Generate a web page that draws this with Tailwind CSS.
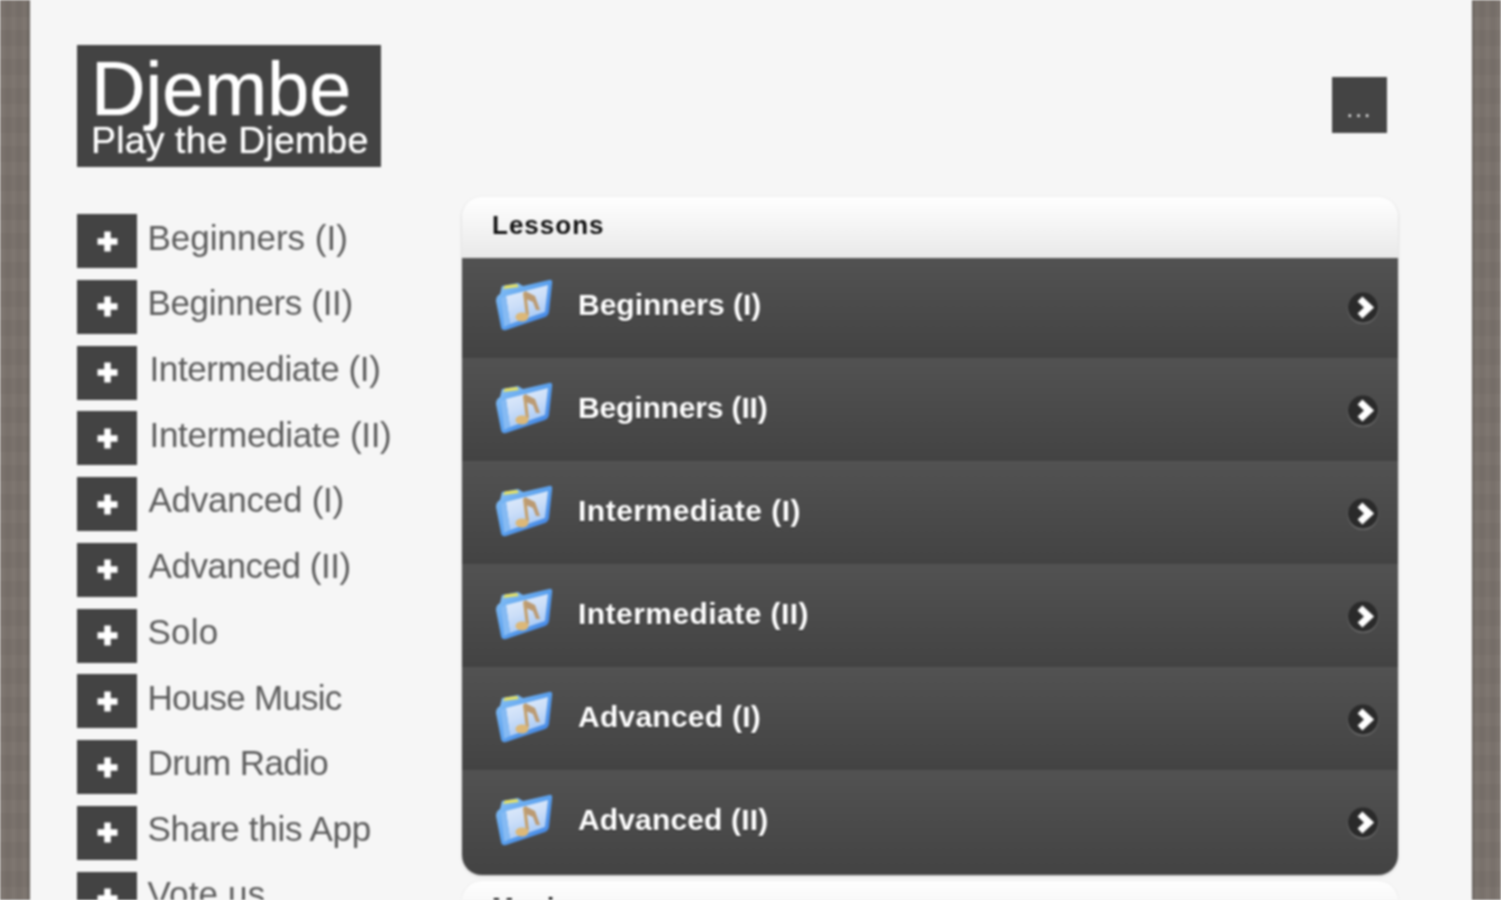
<!DOCTYPE html>
<html>
<head>
<meta charset="utf-8">
<script src="https://cdn.jsdelivr.net/npm/@tailwindcss/browser@4"></script>
<title>Djembe</title>
</head>
<body class="m-0 bg-[#f6f6f6]">
<svg width="0" height="0" class="absolute">
  <defs>
    <linearGradient id="fb" x1="0" y1="0" x2="1" y2="1"><stop offset="0" stop-color="#8cc4f6"/><stop offset="0.5" stop-color="#5aa0ee"/><stop offset="1" stop-color="#3f80e4"/></linearGradient>
    <linearGradient id="ff" x1="0" y1="0" x2="0.4" y2="1"><stop offset="0" stop-color="#e6effb"/><stop offset="0.55" stop-color="#cbdef8"/><stop offset="1" stop-color="#a7c8f4"/></linearGradient>
    <symbol id="folder" viewBox="0 0 60 56">
      <path d="M5 17 L7 9 L23 6 L28 9 L54 3 Q58 2 57 7 L54 35 Q53 39 50 40 L11 53 Q7 54 6 50 L1 24 Q1 19 5 17Z" fill="url(#fb)"/>
      <path d="M8 12 L10 8.5 L22 7 L24 10Z" fill="#e6e060"/>
      <path d="M11 19 L53 8 L50 35 L15 47Z" fill="url(#ff)"/>
      <path d="M31 14 L34 38 L31 39 L28 16Z" fill="#c4a06c"/>
      <path d="M30 14 L40 19 L45 33 L41 33 L38 25 L31 22Z" fill="#bb9a72"/>
      <ellipse cx="27" cy="40" rx="6.5" ry="4.5" fill="#dcb878"/>
      <path d="M11 19 L6 21 L9 50 L15 47Z" fill="#85baf3"/>
    </symbol>
    <symbol id="arrow" viewBox="0 0 32 32">
      <circle cx="16" cy="16.5" r="15.5" fill="#6a6a6a"/>
      <circle cx="16" cy="15.5" r="15" fill="#2a2a2a"/>
      <path d="M13 7 L22 15.5 L13 24" stroke="#fff" stroke-width="7" fill="none"/>
    </symbol>
    <symbol id="plus" viewBox="0 0 23 23">
      <path d="M11.5 1.5V21.5M1.5 11.5H21.5" stroke="#fff" stroke-width="6.5"/>
    </symbol>
  </defs>
</svg>
<div class="w-full h-[900px] overflow-hidden blur-[0.8px] [font-family:'Liberation_Sans',Arial,sans-serif] bg-[#7a726c] [background-image:repeating-linear-gradient(90deg,rgba(255,255,255,0.015)_0_5px,rgba(0,0,0,0.025)_5px_11px),repeating-linear-gradient(0deg,rgba(255,255,255,0.015)_0_13px,rgba(0,0,0,0.02)_13px_29px)]">
  <div class="ml-[30px] w-[1442px] h-full bg-[#f6f6f6] shadow-[0_0_3px_rgba(50,50,50,0.7)] pl-[47px] pr-[74px] pt-[45px] overflow-hidden">
    <header class="flex justify-between items-start h-[122px] mb-[30px]">
      <div class="w-[304px] h-[122px] bg-[#434343] shadow-[0_0_2px_#fff] text-white pl-[14px] pt-[5px] [text-shadow:0_0_1px_#fff]">
        <div class="text-[75.5px] leading-[78px]">Djembe</div>
        <div class="text-[37.5px] leading-[30px] -mt-[3px] tracking-[0.15px]">Play the Djembe</div>
      </div>
      <button class="w-[55px] h-[56px] mt-[32px] mr-[11px] bg-[#444444] shadow-[0_0_3px_#fff] text-[#f0f0f0] text-[24px] tracking-[2px] leading-none flex items-end justify-center pb-[12px]">...</button>
    </header>
    <div class="flex items-start">
      <nav class="w-[385px] shrink-0 pt-[17px] flex flex-col gap-[11.75px]">
        <a class="flex items-center h-[54px] text-[#5c5c5c] text-[35px]"><span class="w-[60px] h-[54px] bg-[#434343] flex items-center justify-center pl-[1px]"><svg class="w-[23px] h-[23px]"><use href="#plus"/></svg></span><span class="ml-[10.5px] pb-[6px]">Beginners (I)</span></a>
        <a class="flex items-center h-[54px] text-[#5c5c5c] text-[35px]"><span class="w-[60px] h-[54px] bg-[#434343] flex items-center justify-center pl-[1px]"><svg class="w-[23px] h-[23px]"><use href="#plus"/></svg></span><span class="ml-[10.5px] pb-[7px] tracking-[-0.35px]">Beginners (II)</span></a>
        <a class="flex items-center h-[54px] text-[#5c5c5c] text-[35px]"><span class="w-[60px] h-[54px] bg-[#434343] flex items-center justify-center pl-[1px]"><svg class="w-[23px] h-[23px]"><use href="#plus"/></svg></span><span class="ml-[12.5px] pb-[6px] tracking-[-0.4px]">Intermediate (I)</span></a>
        <a class="flex items-center h-[54px] text-[#5c5c5c] text-[35px]"><span class="w-[60px] h-[54px] bg-[#434343] flex items-center justify-center pl-[1px]"><svg class="w-[23px] h-[23px]"><use href="#plus"/></svg></span><span class="ml-[12.5px] pb-[6px] tracking-[-0.3px]">Intermediate (II)</span></a>
        <a class="flex items-center h-[54px] text-[#5c5c5c] text-[35px]"><span class="w-[60px] h-[54px] bg-[#434343] flex items-center justify-center pl-[1px]"><svg class="w-[23px] h-[23px]"><use href="#plus"/></svg></span><span class="ml-[11.5px] pb-[7px] tracking-[-0.25px]">Advanced (I)</span></a>
        <a class="flex items-center h-[54px] text-[#5c5c5c] text-[35px]"><span class="w-[60px] h-[54px] bg-[#434343] flex items-center justify-center pl-[1px]"><svg class="w-[23px] h-[23px]"><use href="#plus"/></svg></span><span class="ml-[11.5px] pb-[7px] tracking-[-0.45px]">Advanced (II)</span></a>
        <a class="flex items-center h-[54px] text-[#5c5c5c] text-[35px]"><span class="w-[60px] h-[54px] bg-[#434343] flex items-center justify-center pl-[1px]"><svg class="w-[23px] h-[23px]"><use href="#plus"/></svg></span><span class="ml-[10.5px] pb-[7px] tracking-[0.25px]">Solo</span></a>
        <a class="flex items-center h-[54px] text-[#5c5c5c] text-[35px]"><span class="w-[60px] h-[54px] bg-[#434343] flex items-center justify-center pl-[1px]"><svg class="w-[23px] h-[23px]"><use href="#plus"/></svg></span><span class="ml-[10.5px] pb-[7px] tracking-[-0.75px]">House Music</span></a>
        <a class="flex items-center h-[54px] text-[#5c5c5c] text-[35px]"><span class="w-[60px] h-[54px] bg-[#434343] flex items-center justify-center pl-[1px]"><svg class="w-[23px] h-[23px]"><use href="#plus"/></svg></span><span class="ml-[10.5px] pb-[8px] tracking-[-0.6px]">Drum Radio</span></a>
        <a class="flex items-center h-[54px] text-[#5c5c5c] text-[35px]"><span class="w-[60px] h-[54px] bg-[#434343] flex items-center justify-center pl-[1px]"><svg class="w-[23px] h-[23px]"><use href="#plus"/></svg></span><span class="ml-[10.5px] pb-[8px] tracking-[-0.3px]">Share this App</span></a>
        <a class="flex items-center h-[54px] text-[#5c5c5c] text-[35px]"><span class="w-[60px] h-[54px] bg-[#434343] flex items-center justify-center pl-[1px]"><svg class="w-[23px] h-[23px]"><use href="#plus"/></svg></span><span class="ml-[10.5px] pb-[8px] tracking-[0.15px]">Vote us</span></a>
      </nav>
      <main class="flex-1 min-w-0">
        <section class="rounded-[20px] overflow-hidden shadow-[0_1px_3px_rgba(0,0,0,0.18)]">
          <h2 class="h-[61px] bg-linear-to-b from-white to-[#e9e9e9] pl-[30px] pt-[13px] text-[26px] leading-[30px] font-bold text-[#111111] tracking-[1px] [text-shadow:0_1px_0_#fff]">Lessons</h2>
          <a class="flex items-center h-[100px] pl-[33px] pr-[19px] pb-[6px] bg-linear-to-b from-[#525252] to-[#434343] text-white text-[30px] font-bold [text-shadow:0_1px_1px_#222]"><svg class="w-[60px] h-[56px] mt-[-1px] shrink-0"><use href="#folder"/></svg><span class="ml-[23px] flex-1 pb-[2px]">Beginners (I)</span><svg class="w-[32px] h-[32px] mt-[6px]"><use href="#arrow"/></svg></a>
          <a class="flex items-center h-[103px] pl-[33px] pr-[19px] pb-[3px] bg-linear-to-b from-[#525252] to-[#434343] text-white text-[30px] font-bold [text-shadow:0_1px_1px_#222]"><svg class="w-[60px] h-[56px] mt-[-1px] shrink-0"><use href="#folder"/></svg><span class="ml-[23px] flex-1 pb-[2px] tracking-[-0.15px]">Beginners (II)</span><svg class="w-[32px] h-[32px] mt-[6px]"><use href="#arrow"/></svg></a>
          <a class="flex items-center h-[103px] pl-[33px] pr-[19px] pb-[3px] bg-linear-to-b from-[#525252] to-[#434343] text-white text-[30px] font-bold [text-shadow:0_1px_1px_#222]"><svg class="w-[60px] h-[56px] mt-[-1px] shrink-0"><use href="#folder"/></svg><span class="ml-[23px] flex-1 pb-[2px] tracking-[0.5px]">Intermediate (I)</span><svg class="w-[32px] h-[32px] mt-[6px]"><use href="#arrow"/></svg></a>
          <a class="flex items-center h-[103px] pl-[33px] pr-[19px] pb-[3px] bg-linear-to-b from-[#525252] to-[#434343] text-white text-[30px] font-bold [text-shadow:0_1px_1px_#222]"><svg class="w-[60px] h-[56px] mt-[-1px] shrink-0"><use href="#folder"/></svg><span class="ml-[23px] flex-1 pb-[2px] tracking-[0.45px]">Intermediate (II)</span><svg class="w-[32px] h-[32px] mt-[6px]"><use href="#arrow"/></svg></a>
          <a class="flex items-center h-[103px] pl-[33px] pr-[19px] pb-[3px] bg-linear-to-b from-[#525252] to-[#434343] text-white text-[30px] font-bold [text-shadow:0_1px_1px_#222]"><svg class="w-[60px] h-[56px] mt-[-1px] shrink-0"><use href="#folder"/></svg><span class="ml-[23px] flex-1 pb-[2px] tracking-[0.25px]">Advanced (I)</span><svg class="w-[32px] h-[32px] mt-[6px]"><use href="#arrow"/></svg></a>
          <a class="flex items-center h-[105px] pl-[33px] pr-[19px] pb-[5px] bg-linear-to-b from-[#525252] to-[#434343] text-white text-[30px] font-bold [text-shadow:0_1px_1px_#222]"><svg class="w-[60px] h-[56px] mt-[-1px] shrink-0"><use href="#folder"/></svg><span class="ml-[23px] flex-1 pb-[2px] tracking-[0.15px]">Advanced (II)</span><svg class="w-[32px] h-[32px] mt-[6px]"><use href="#arrow"/></svg></a>
        </section>
        <section class="mt-[6px] rounded-t-[20px] overflow-hidden shadow-[0_0_2px_rgba(0,0,0,0.12)]">
          <h2 class="h-[61px] bg-linear-to-b from-white to-[#e9e9e9] pl-[30px] pt-[11px] text-[26px] leading-[30px] font-bold text-[#111111] tracking-[1px]">Music</h2>
        </section>
      </main>
    </div>
  </div>
</div>
</body>
</html>
